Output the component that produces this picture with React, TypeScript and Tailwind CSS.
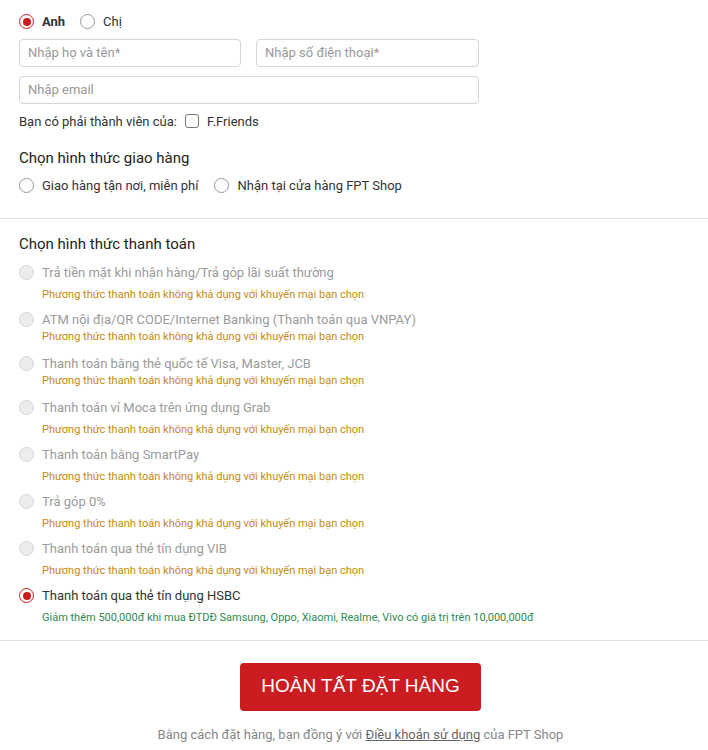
import React, { useState } from "react";

type PayOption = {
  name: string;
  note: string;
  disabled: boolean;
  tight?: boolean;
};

const unavailable = "Phương thức thanh toán không khả dụng với khuyến mại bạn chọn";

const payOptions: PayOption[] = [
  { name: "Trả tiền mặt khi nhận hàng/Trả góp lãi suất thường", note: unavailable, disabled: true },
  { name: "ATM nội địa/QR CODE/Internet Banking (Thanh toán qua VNPAY)", note: unavailable, disabled: true, tight: true },
  { name: "Thanh toán bằng thẻ quốc tế Visa, Master, JCB", note: unavailable, disabled: true, tight: true },
  { name: "Thanh toán ví Moca trên ứng dụng Grab", note: unavailable, disabled: true },
  { name: "Thanh toán bằng SmartPay", note: unavailable, disabled: true },
  { name: "Trả góp 0%", note: unavailable, disabled: true },
  { name: "Thanh toán qua thẻ tín dụng VIB", note: unavailable, disabled: true },
  {
    name: "Thanh toán qua thẻ tín dụng HSBC",
    note: "Giảm thêm 500,000đ khi mua ĐTDĐ Samsung, Oppo, Xiaomi, Realme, Vivo có giá trị trên 10,000,000đ",
    disabled: false,
  },
];

const Radio = ({ checked, disabled }: { checked?: boolean; disabled?: boolean }) => {
  if (checked) {
    return (
      <span className="flex h-[15px] w-[15px] shrink-0 items-center justify-center rounded-full border-[1.5px] border-[#cb1c22] bg-white">
        <span className="h-[8px] w-[8px] rounded-full bg-[#cb1c22]" />
      </span>
    );
  }
  return (
    <span
      className={
        disabled
          ? "block h-[15px] w-[15px] shrink-0 rounded-full border border-[#d6d6d6] bg-[#ececec]"
          : "block h-[15px] w-[15px] shrink-0 rounded-full border border-[#9a9a9a] bg-white"
      }
    />
  );
};

const App = () => {
  const [gender, setGender] = useState("anh");
  const [ship, setShip] = useState("");

  return (
    <div className="min-h-[750px] w-[708px] bg-white text-[13px] text-[#333] [font-family:Roboto,'Noto_Sans',sans-serif]">
      <div className="px-[19px] pt-[12px]">
        <div className="flex items-center gap-[9px]">
          <button className="flex items-center gap-[8px]" onClick={() => setGender("anh")}>
            <Radio checked={gender === "anh"} />
            <span className="font-bold">Anh</span>
          </button>
          <button className="ml-[6px] flex items-center gap-[8px]" onClick={() => setGender("chi")}>
            <Radio checked={gender === "chi"} />
            <span>Chị</span>
          </button>
        </div>

        <div className="mt-[7px] flex gap-[15px]">
          <input
            placeholder="Nhập họ và tên*"
            className="h-[28px] w-[222px] rounded-[4px] border border-[#d4d4d4] px-[8px] text-[13px] placeholder:text-[#999] focus:outline-none"
          />
          <input
            placeholder="Nhập số điện thoại*"
            className="h-[28px] w-[223px] rounded-[4px] border border-[#d4d4d4] px-[8px] text-[13px] placeholder:text-[#999] focus:outline-none"
          />
        </div>
        <input
          placeholder="Nhập email"
          className="mt-[9px] h-[28px] w-[460px] rounded-[4px] border border-[#d4d4d4] px-[8px] text-[13px] placeholder:text-[#999] focus:outline-none"
        />

        <div className="mt-[8px] flex items-center">
          <span>Bạn có phải thành viên của:</span>
          <span className="ml-[8px] h-[14px] w-[14px] rounded-[3px] border border-[#777]" />
          <span className="ml-[8px]">F.Friends</span>
        </div>

        <h3 className="mt-[16px] text-[15px] text-[#222]">Chọn hình thức giao hàng</h3>
        <div className="mt-[6px] flex items-center">
          <button className="flex items-center gap-[8px]" onClick={() => setShip("home")}>
            <Radio checked={ship === "home"} />
            <span>Giao hàng tận nơi, miễn phí</span>
          </button>
          <button className="ml-[16px] flex items-center gap-[8px]" onClick={() => setShip("store")}>
            <Radio checked={ship === "store"} />
            <span>Nhận tại cửa hàng FPT Shop</span>
          </button>
        </div>
      </div>

      <div className="mt-[23px] border-t border-[#e1e1e1]" />

      <div className="px-[19px] pt-[14px]">
        <h3 className="text-[15px] text-[#222]">Chọn hình thức thanh toán</h3>
        <div className="mt-[8px] flex flex-col">
          {payOptions.map((opt) => (
            <div key={opt.name} className={opt.tight ? "pb-[11px]" : "pb-[9px]"}>
              <div className="flex h-[18px] items-center gap-[8px]">
                <Radio checked={!opt.disabled} disabled={opt.disabled} />
                <span className={opt.disabled ? "text-[#9b9b9b]" : "text-[#333]"}>{opt.name}</span>
              </div>
              <div
                className={
                  (opt.tight ? "mt-[1px] " : "mt-[6px] ") +
                  (opt.disabled ? "text-[#c58a12]" : "text-[#2e8a4e]") +
                  " pl-[23px] text-[11px] leading-[14px]"
                }
              >
                {opt.note}
              </div>
            </div>
          ))}
        </div>
      </div>

      <div className="mt-[6px] border-t border-[#e1e1e1]" />

      <div className="flex flex-col items-center pl-[13px] pt-[22px]">
        <button className="h-[48px] w-[241px] rounded-[4px] bg-[#cb1c22] text-[19px] text-white [font-family:'Liberation_Sans',Arial,sans-serif]">
          HOÀN TẤT ĐẶT HÀNG
        </button>
        <p className="mt-[14px] text-[13px] text-[#888]">
          Bằng cách đặt hàng, bạn đồng ý với <span className="text-[#666] underline">Điều khoản sử dụng</span> của FPT Shop
        </p>
      </div>
    </div>
  );
};

export default App;
